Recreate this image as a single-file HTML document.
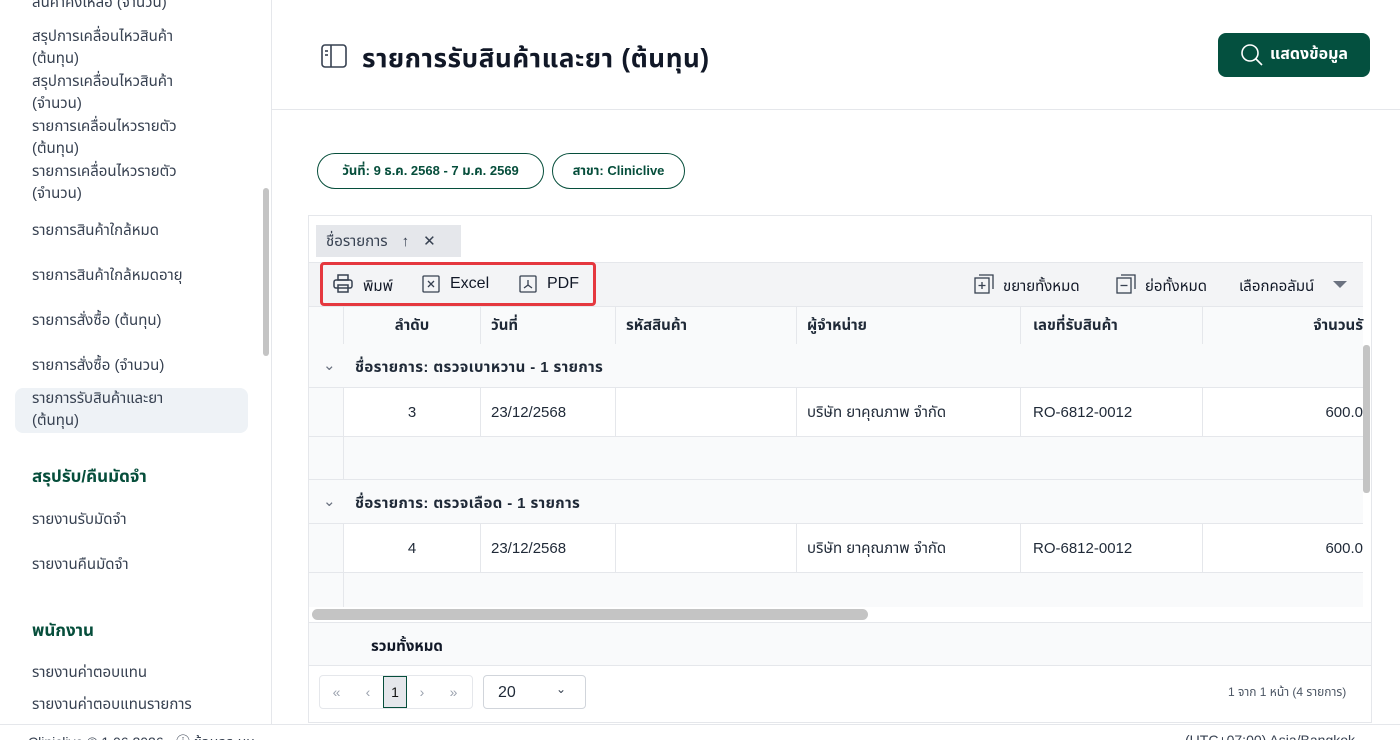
<!DOCTYPE html>
<html><head><meta charset="utf-8"><style>
*{box-sizing:border-box;margin:0;padding:0}
body{width:1400px;height:740px;overflow:hidden;background:#fff;font-family:"Liberation Sans","Noto Sans Thai","Noto Sans CJK SC",sans-serif;color:#1f2937;position:relative}
.a{position:absolute}
.side{left:0;top:0;width:272px;height:724px;border-right:1px solid #e5e7eb;overflow:hidden}
.si{position:absolute;left:32px;font-size:15px;color:#374151;line-height:22px}
.sh{position:absolute;left:32px;font-size:17px;font-weight:bold;color:#064e3b}
.t{font-size:15px;color:#111827}
.b{font-weight:bold}
.row{position:absolute;left:309px;width:1054px;border-bottom:1px solid #e5e7eb;background:#fff}
.c{position:absolute;top:0;height:100%;border-right:1px solid #e5e7eb;display:flex;align-items:center;font-size:15px}
</style></head><body>
<div class="a side">
<div class="si" style="top:-8px">สินค้าคงเหลือ (จำนวน)</div>
<div class="si" style="top:26px">สรุปการเคลื่อนไหวสินค้า<br>(ต้นทุน)</div>
<div class="si" style="top:71px">สรุปการเคลื่อนไหวสินค้า<br>(จำนวน)</div>
<div class="si" style="top:116px">รายการเคลื่อนไหวรายตัว<br>(ต้นทุน)</div>
<div class="si" style="top:161px">รายการเคลื่อนไหวรายตัว<br>(จำนวน)</div>
<div class="si" style="top:220px">รายการสินค้าใกล้หมด</div>
<div class="si" style="top:265px">รายการสินค้าใกล้หมดอายุ</div>
<div class="si" style="top:310px">รายการสั่งซื้อ (ต้นทุน)</div>
<div class="si" style="top:355px">รายการสั่งซื้อ (จำนวน)</div>
<div class="a" style="left:15px;top:388px;width:233px;height:45px;background:#eef2f6;border-radius:8px"></div>
<div class="si" style="top:388px">รายการรับสินค้าและยา<br>(ต้นทุน)</div>
<div class="sh" style="top:464px">สรุปรับ/คืนมัดจำ</div>
<div class="si" style="top:509px">รายงานรับมัดจำ</div>
<div class="si" style="top:554px">รายงานคืนมัดจำ</div>
<div class="sh" style="top:618px">พนักงาน</div>
<div class="si" style="top:662px">รายงานค่าตอบแทน</div>
<div class="si" style="top:694px">รายงานค่าตอบแทนรายการ</div>
<div class="a" style="left:263px;top:188px;width:6px;height:168px;background:#c4c4c4;border-radius:3px"></div>
</div>
<svg class="a" style="left:321px;top:44px" width="26" height="24" viewBox="0 0 26 24" fill="none" stroke="#374151" stroke-width="1.6"><rect x="1" y="1" width="24" height="22" rx="3"/><line x1="10" y1="1" x2="10" y2="23"/><line x1="4" y1="7" x2="7" y2="7"/><line x1="4" y1="11" x2="7" y2="11"/></svg>
<div class="a b" style="left:362px;top:39px;font-size:26px;letter-spacing:0.6px;color:#111827">รายการรับสินค้าและยา (ต้นทุน)</div>
<div class="a" style="left:1218px;top:33px;width:152px;height:44px;background:#04503f;border-radius:8px;color:#fff;font-size:16px;font-weight:bold;display:flex;align-items:center;justify-content:center;gap:6px">
<svg width="24" height="24" viewBox="0 0 24 24" fill="none" stroke="#fff" stroke-width="1.6"><circle cx="10" cy="10" r="8"/><line x1="16" y1="16" x2="22" y2="22"/></svg>แสดงข้อมูล</div>
<div class="a" style="left:272px;top:109px;width:1128px;height:1px;background:#e5e7eb"></div>
<div class="a b" style="left:317px;top:153px;width:227px;height:36px;border:1.5px solid #064e3b;border-radius:18px;font-size:13px;color:#064e3b;display:flex;align-items:center;justify-content:center">วันที่: 9 ธ.ค. 2568 - 7 ม.ค. 2569</div>
<div class="a b" style="left:552px;top:153px;width:133px;height:36px;border:1.5px solid #064e3b;border-radius:18px;font-size:13px;color:#064e3b;display:flex;align-items:center;justify-content:center">สาขา: Cliniclive</div>
<div class="a" style="left:308px;top:215px;width:1064px;height:508px;border:1px solid #e5e7eb;background:#fff"></div>
<div class="a" style="left:316px;top:225px;width:145px;height:32px;background:#e5e7eb;font-size:15px;color:#374151;display:flex;align-items:center;padding-left:10px;gap:14px">ชื่อรายการ <span>↑</span><span>✕</span></div>
<div class="a" style="left:309px;top:262px;width:1054px;height:44px;background:#f3f4f6;border-top:1px solid #e5e7eb"></div>
<div class="a" style="left:320px;top:262px;width:276px;height:44px;border:3px solid #e5383f;border-radius:4px"></div>
<svg class="a" style="left:333px;top:274px" width="20" height="20" viewBox="0 0 20 20" fill="none" stroke="#374151" stroke-width="1.5"><rect x="5" y="1" width="10" height="5"/><rect x="1" y="6" width="18" height="8" rx="2"/><rect x="5" y="11" width="10" height="7"/></svg>
<div class="a t" style="left:363px;top:275px">พิมพ์</div>
<svg class="a" style="left:422px;top:275px" width="18" height="18" viewBox="0 0 18 18" fill="none" stroke="#374151" stroke-width="1.3"><rect x="1" y="1" width="16" height="16" rx="1"/><path d="M6 6l6 6M12 6l-6 6"/></svg>
<div class="a t" style="left:450px;top:275px;font-size:16px">Excel</div>
<svg class="a" style="left:519px;top:275px" width="18" height="18" viewBox="0 0 18 18" fill="none" stroke="#374151" stroke-width="1.3"><rect x="1" y="1" width="16" height="16" rx="1"/><path d="M9 5v5l-4 3M9 10l4 3"/></svg>
<div class="a t" style="left:547px;top:275px;font-size:16px">PDF</div>
<svg class="a" style="left:974px;top:274px" width="20" height="20" viewBox="0 0 20 20" fill="none" stroke="#374151" stroke-width="1.3"><rect x="1" y="4" width="14" height="15"/><path d="M5 1h14v14"/><path d="M8 8v7M4.5 11.5h7"/></svg>
<div class="a t" style="left:1003px;top:275px">ขยายทั้งหมด</div>
<svg class="a" style="left:1116px;top:274px" width="20" height="20" viewBox="0 0 20 20" fill="none" stroke="#374151" stroke-width="1.3"><rect x="1" y="4" width="14" height="15"/><path d="M5 1h14v14"/><path d="M4.5 11.5h7"/></svg>
<div class="a t" style="left:1145px;top:275px">ย่อทั้งหมด</div>
<div class="a t" style="left:1239px;top:275px">เลือกคอลัมน์</div>
<div class="a" style="left:1333px;top:281px;border:7px solid transparent;border-top:7px solid #6b7280;border-bottom:0"></div>
<div class="row b" style="top:306px;height:39px;background:#f9fafb;border-top:1px solid #e5e7eb">
<div class="c" style="left:0;width:35px"></div>
<div class="c" style="left:35px;width:137px;justify-content:center">ลำดับ</div>
<div class="c" style="left:172px;width:135px;padding-left:10px">วันที่</div>
<div class="c" style="left:307px;width:181px;padding-left:10px">รหัสสินค้า</div>
<div class="c" style="left:488px;width:224px;padding-left:10px">ผู้จำหน่าย</div>
<div class="c" style="left:712px;width:182px;padding-left:12px">เลขที่รับสินค้า</div>
<div class="c" style="left:894px;width:160px;justify-content:flex-end;border:0">จำนวนรั</div>
</div>
<div class="row b" style="top:344px;height:44px;font-size:15px;background:#f9fafb"><span class="a" style="left:14px;top:12px;font-weight:normal;color:#6b7280">⌄</span><span class="a" style="left:46px;top:12px;letter-spacing:0.4px">ชื่อรายการ: ตรวจเบาหวาน - 1 รายการ</span></div>
<div class="row" style="top:388px;height:49px"><div class="c" style="left:0;width:35px;background:#f9fafb"></div>
<div class="c" style="left:35px;width:137px;justify-content:center">3</div>
<div class="c" style="left:172px;width:135px;padding-left:10px">23/12/2568</div>
<div class="c" style="left:307px;width:181px"></div>
<div class="c" style="left:488px;width:224px;padding-left:10px">บริษัท ยาคุณภาพ จำกัด</div>
<div class="c" style="left:712px;width:182px;padding-left:12px">RO-6812-0012</div>
<div class="c" style="left:894px;width:160px;justify-content:flex-end;border:0">600.0</div></div>
<div class="row" style="top:437px;height:43px;background:#f9fafb"><div class="c" style="left:0;width:35px"></div></div>
<div class="row b" style="top:480px;height:44px;font-size:15px;background:#f9fafb"><span class="a" style="left:14px;top:12px;font-weight:normal;color:#6b7280">⌄</span><span class="a" style="left:46px;top:12px;letter-spacing:0.4px">ชื่อรายการ: ตรวจเลือด - 1 รายการ</span></div>
<div class="row" style="top:524px;height:49px"><div class="c" style="left:0;width:35px;background:#f9fafb"></div>
<div class="c" style="left:35px;width:137px;justify-content:center">4</div>
<div class="c" style="left:172px;width:135px;padding-left:10px">23/12/2568</div>
<div class="c" style="left:307px;width:181px"></div>
<div class="c" style="left:488px;width:224px;padding-left:10px">บริษัท ยาคุณภาพ จำกัด</div>
<div class="c" style="left:712px;width:182px;padding-left:12px">RO-6812-0012</div>
<div class="c" style="left:894px;width:160px;justify-content:flex-end;border:0">600.0</div></div>
<div class="row" style="top:573px;height:34px;background:#f9fafb;border:0"><div class="c" style="left:0;width:35px"></div></div>
<div class="a" style="left:1363px;top:345px;width:7px;height:148px;background:#c4c4c4;border-radius:3px"></div>
<div class="a" style="left:312px;top:609px;width:556px;height:11px;background:#c4c4c4;border-radius:6px"></div>
<div class="a" style="left:309px;top:622px;width:1062px;height:44px;background:#f9fafb;border-top:1px solid #e5e7eb;border-bottom:1px solid #e5e7eb"></div>
<div class="a b t" style="left:371px;top:635px">รวมทั้งหมด</div>
<div class="a" style="left:319px;top:675px;width:154px;height:34px;border:1px solid #e5e7eb;border-radius:4px;display:flex;color:#9ca3af;font-size:14px">
<span style="width:33px;text-align:center;line-height:32px">«</span><span style="width:30px;text-align:center;line-height:32px">‹</span><span style="width:24px;text-align:center;line-height:30px;background:#e5e7eb;border:1px solid #064e3b;color:#111">1</span><span style="width:30px;text-align:center;line-height:32px">›</span><span style="width:33px;text-align:center;line-height:32px">»</span></div>
<div class="a" style="left:483px;top:675px;width:103px;height:34px;border:1px solid #d1d5db;border-radius:4px;font-size:16px;padding:8px 14px">20<span style="position:absolute;left:72px;top:6px;font-size:12px;color:#374151">⌄</span></div>
<div class="a" style="left:1228px;top:684px;font-size:12px;color:#4b5563">1 จาก 1 หน้า (4 รายการ)</div>
<div class="a" style="left:0;top:724px;width:1400px;height:16px;border-top:1px solid #e5e7eb;background:#fff;font-size:14px;color:#374151;overflow:hidden"><span class="a" style="left:28px;top:7px">Cliniclive © 1.06.2026 · ⓘ ข้อมูลระบบ</span><span class="a" style="left:1185px;top:7px">(UTC+07:00) Asia/Bangkok</span></div>
</body></html>
